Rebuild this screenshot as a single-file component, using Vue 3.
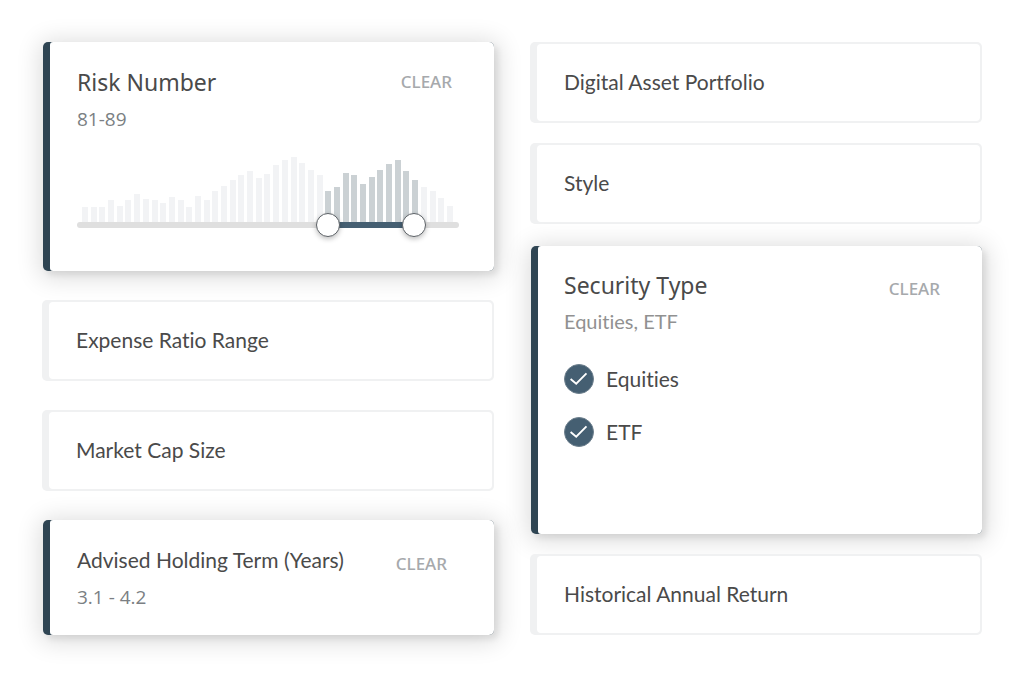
<script setup>
import { ref, computed } from 'vue'

// histogram heights in px
const bars = [
  15, 15, 15, 22, 16, 22, 28, 23, 22, 19, 25, 22, 15, 26, 22, 31, 36, 42, 47, 51, 44, 48,
  57, 62, 65, 59, 52, 47, 31, 35, 49, 47, 38, 45, 52, 58, 62, 51, 42, 35, 31, 24, 16
]

const MIN = 59
const MAX = 92
const low = ref(81)
const high = ref(89)

const ratio = (v) => (v - MIN) / (MAX - MIN)
const isActive = (i) => {
  const last = bars.length - 1
  return i >= Math.round(ratio(low.value) * last) && i <= Math.round(ratio(high.value) * last)
}
const fillStyle = computed(() => ({
  left: ratio(low.value) * 100 + '%',
  right: (1 - ratio(high.value)) * 100 + '%'
}))

const clearRisk = () => {
  low.value = MIN
  high.value = MAX
}

const term = ref('3.1 - 4.2')

const types = ['Equities', 'ETF']
const selected = ref(['Equities', 'ETF'])
</script>

<template>
  <main class="filters">
    <div class="column column-left">
      <section class="card active">
        <div class="body">
          <header class="head">
            <h2 class="title wide">Risk Number</h2>
            <button type="button" class="clear" @click="clearRisk">CLEAR</button>
          </header>
          <p class="value">{{ low }}-{{ high }}</p>
          <div class="chart">
            <span
              v-for="(h, i) in bars"
              :key="i"
              class="bar"
              :class="{ on: isActive(i) }"
              :style="{ height: h + 'px' }"
            ></span>
          </div>
          <div class="slider">
            <div class="fill-area"><div class="fill" :style="fillStyle"></div></div>
            <input v-model.number="low" type="range" :min="MIN" :max="MAX" aria-label="Lowest risk number" />
            <input v-model.number="high" type="range" :min="MIN" :max="MAX" aria-label="Highest risk number" />
          </div>
        </div>
      </section>

      <section class="card">
        <button type="button" class="body closed">Expense Ratio Range</button>
      </section>

      <section class="card">
        <button type="button" class="body closed">Market Cap Size</button>
      </section>

      <section class="card active">
        <div class="body term">
          <header class="head low">
            <h2 class="title">Advised Holding Term (Years)</h2>
            <button type="button" class="clear" @click="term = ''">CLEAR</button>
          </header>
          <p class="value">{{ term }}</p>
        </div>
      </section>
    </div>

    <div class="column column-right">
      <section class="card">
        <button type="button" class="body closed">Digital Asset Portfolio</button>
      </section>

      <section class="card">
        <button type="button" class="body closed">Style</button>
      </section>

      <section class="card active">
        <div class="body types">
          <header class="head low">
            <h2 class="title wide">Security Type</h2>
            <button type="button" class="clear" @click="selected = []">CLEAR</button>
          </header>
          <p class="summary">{{ selected.join(', ') }}</p>
          <div class="options">
            <label v-for="t in types" :key="t" class="option">
              <input v-model="selected" type="checkbox" :value="t" />
              <span class="tick">
                <svg viewBox="0 0 30 30" aria-hidden="true">
                  <path d="M6 15 L12 20 L23 9" fill="none" stroke="#fff" stroke-width="2" />
                </svg>
              </span>
              {{ t }}
            </label>
          </div>
        </div>
      </section>

      <section class="card">
        <button type="button" class="body closed">Historical Annual Return</button>
      </section>
    </div>
  </main>
</template>

<style>
body {
  background: #fff;
}
</style>

<style scoped>
.filters {
  display: grid;
  grid-template-columns: 1fr 1fr;
  gap: 36px;
  padding: 42px;
  font-family: Lato, "Liberation Sans", sans-serif;
  font-variant-ligatures: none;
  color: #4a4a4a;
}
.column {
  display: flex;
  flex-direction: column;
}
.column-left {
  gap: 29px;
}
.column-right {
  gap: 20px;
}
.card {
  box-sizing: border-box;
  padding: 2px 2px 2px 7px;
  border-radius: 5px;
  background: #f0f1f2;
}
.card.active {
  padding: 0;
  margin-left: 1px;
  background: #2f4553;
  padding-left: 7px;
  box-shadow: 4px 4px 6px rgba(0, 0, 0, 0.08), 1px 3px 24px 4px rgba(0, 0, 0, 0.14);
}
.column-right .card.active {
  margin-top: 2px;
}
.body {
  display: block;
  box-sizing: border-box;
  width: 100%;
  border: 0;
  border-radius: 4px;
  background: #fff;
}
.card.active .body {
  padding: 24px 35px 43px 27px;
  border-radius: 3px 5px 5px 3px;
}
.card.active .term {
  padding: 24px 40px 25px 27px;
}
.card.active .types {
  padding: 23px 35px 87px 26px;
}
.closed {
  padding: 22px 27px 23px;
  font-family: inherit;
  font-size: 21px;
  font-variant-ligatures: none;
  line-height: 32px;
  color: inherit;
  text-align: left;
  cursor: pointer;
}
.head {
  display: flex;
  align-items: flex-start;
  justify-content: space-between;
  padding-right: 7px;
}
.title {
  margin: 0;
  font-size: 21px;
  font-weight: 400;
  line-height: 32px;
}
.title.wide {
  font-family: "Noto Sans", "Open Sans", sans-serif;
  font-size: 23px;
}
.clear {
  padding: 0;
  border: 0;
  background: none;
  font-family: "Noto Sans", "Open Sans", sans-serif;
  font-size: 17px;
  font-weight: 500;
  line-height: 32px;
  color: #a6a9ac;
  cursor: pointer;
}
.low .clear {
  margin: 4px 0 -4px;
}
.value,
.summary {
  margin: 8px 0 0;
  min-height: 26px;
  font-size: 20px;
  line-height: 26px;
}
.value {
  font-family: "Open Sans", "Noto Sans", sans-serif;
  font-size: 19px;
  color: #7b7f83;
}
.summary {
  margin-top: 7px;
  color: #919191;
}
.chart {
  display: flex;
  align-items: flex-end;
  justify-content: space-between;
  height: 65px;
  margin-top: 25px;
  padding: 0 6px 0 5px;
}
.bar {
  width: 6px;
  background: #f2f3f5;
}
.bar.on {
  background: #cbd1d4;
}
.slider {
  position: relative;
  height: 6px;
  padding: 0 12px;
  border-radius: 3px;
  background: #dfdfdf;
}
.fill-area {
  position: relative;
  height: 6px;
}
.fill {
  position: absolute;
  top: 0;
  bottom: 0;
  background: #455f72;
}
/* two overlaid ranges, only the thumbs take the pointer */
.slider input {
  position: absolute;
  top: -9px;
  left: 0;
  width: 100%;
  height: 24px;
  margin: 0;
  appearance: none;
  background: none;
  pointer-events: none;
}
.slider input::-webkit-slider-thumb {
  appearance: none;
  box-sizing: border-box;
  width: 24px;
  height: 24px;
  border: 1px solid #5c6166;
  border-radius: 50%;
  background: #fff;
  box-shadow: 0 2px 5px rgba(0, 0, 0, 0.25);
  pointer-events: auto;
  cursor: pointer;
}
.options {
  display: flex;
  flex-direction: column;
  gap: 23px;
  margin-top: 30px;
}
.option {
  display: flex;
  align-items: center;
  gap: 12px;
  position: relative;
  font-size: 21px;
  line-height: 30px;
  cursor: pointer;
}
.option input {
  position: absolute;
  width: 30px;
  height: 30px;
  margin: 0;
  opacity: 0;
}
.tick {
  box-sizing: border-box;
  width: 30px;
  height: 30px;
  border: 1px solid #6d7f8d;
  border-radius: 50%;
}
.option input:checked + .tick {
  background: #455f72;
}
.tick svg {
  display: block;
  width: 28px;
  height: 28px;
}
</style>
